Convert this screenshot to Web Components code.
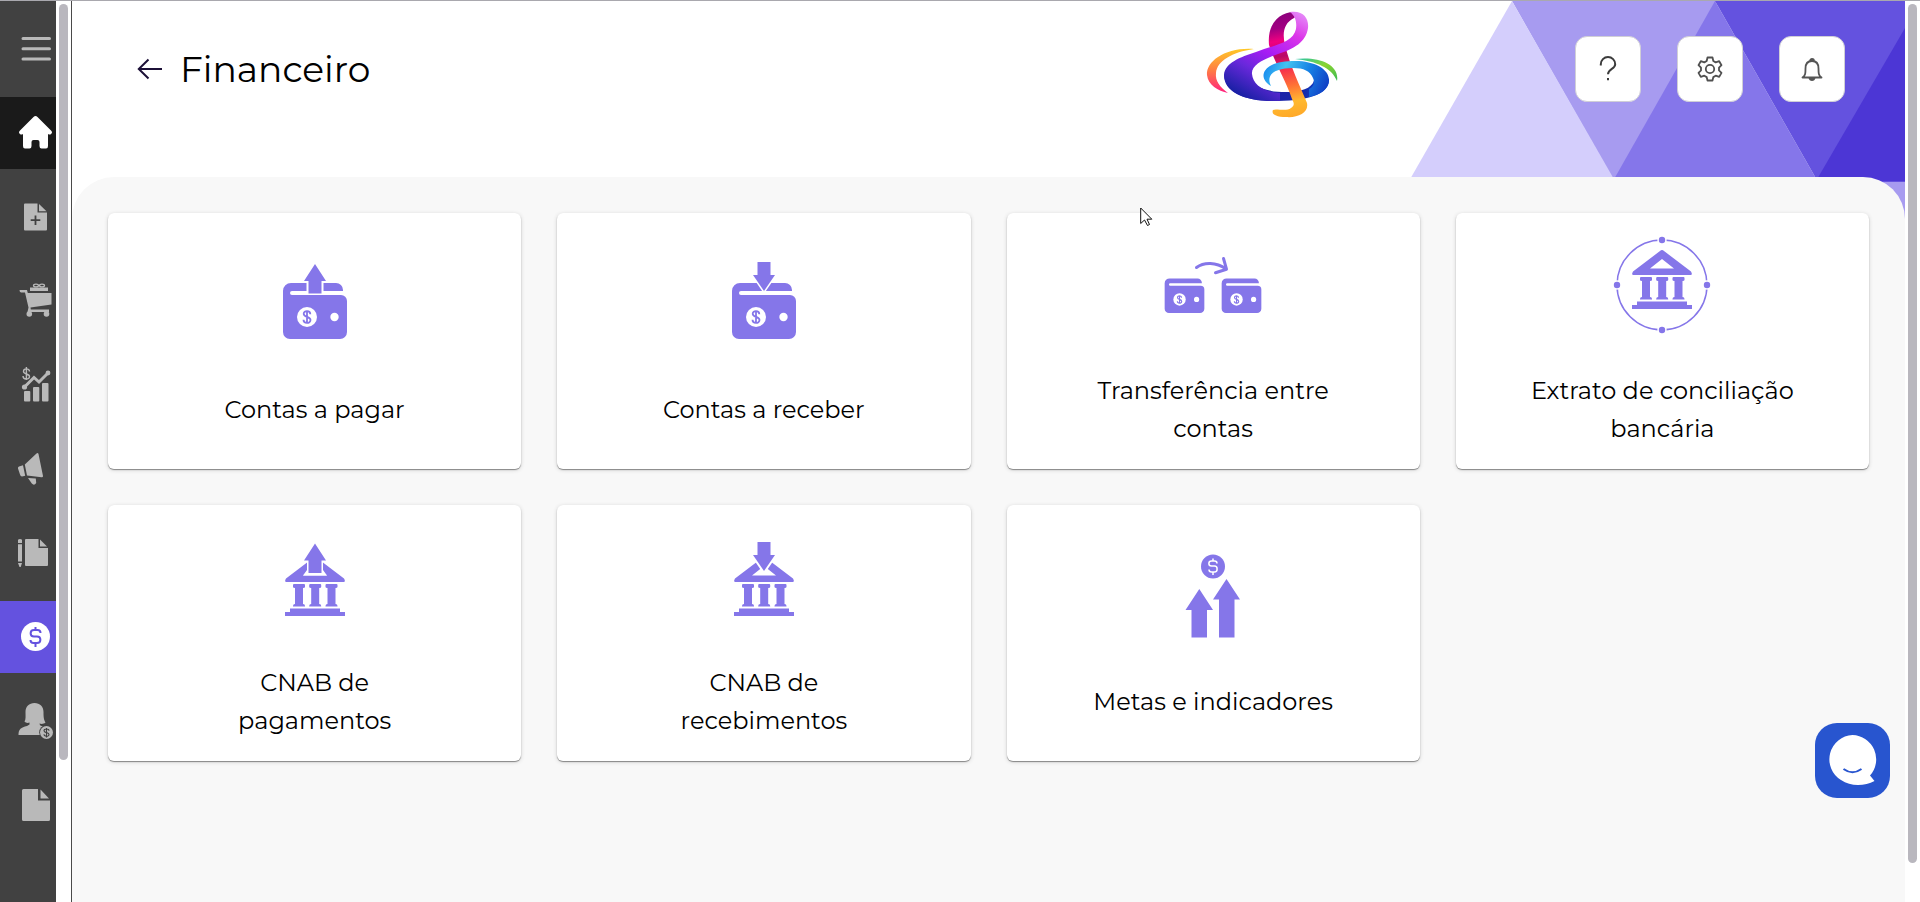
<!DOCTYPE html>
<html lang="pt-BR">
<head>
<meta charset="UTF-8">
<meta name="viewport" content="width=device-width, initial-scale=1.0">
<title>Financeiro</title>
<style>
    body {
        margin: 0;
        font-family: Montserrat, Inter, sans-serif;
        color: #000;
        background: #fff;
    }
</style>
</head>
<body>
<finance-app></finance-app>

<script>
const WALLET = `
    <path d="M26 49H71a7 7 0 0 1 7 7v1H27a2 2 0 0 0 0 4H76a6 6 0 0 1 6 6V98a7 7 0 0 1-7 7H25a7 7 0 0 1-7-7V57a8 8 0 0 1 8-8Z"/>
    <circle cx="42" cy="83" r="10" fill="#fff"/>
    <circle cx="69.500" cy="83" r="4.200" fill="#fff"/>
    <path d="M45.300 80.200c0-4-6.600-4-6.600-.4 0 3.800 6.800 2.400 6.800 6.300 0 3.800-7 3.800-7-.3M42 76.500v13" fill="none" stroke="#8576e9" stroke-width="1.800"/>`;

const COLUMNS = [28, 44.2, 60.5].map(x => `
    <path d="M${x + 1} 43h10q1 0 1 1v2q0 1-2 1v16q2 0 2 2v.6h-12V65q0-2 2-2V47q-2 0-2-1v-2q0-1 1-1Z"/>`).join('');

const BANK = `
    <path fill-rule="evenodd" d="M50 16q1 0 2 1l27 20.500q2 3.500-.5 3.500h-57q-2.500 0-.5-3.500L48 17q1-1 2-1ZM50 25 38 34.500H62Z"/>
    ${COLUMNS}
    <path d="M25 67.500H75V71h5v4H20v-4h5Z"/>`;

const UP = '<path d="M50 30 61 47H56.500V59.500H43.500V47H39Z"/>';

// name: [viewBox, markup]
const ICONS = {
    'menu': ['0 0 40 40', '<path d="M8 9.500H34.500M8 19.700H34.500M8 30H34.500" stroke="currentColor" stroke-width="3" stroke-linecap="round"/>'],
    'home': ['0 0 40 40', '<path d="M18.500 4q2-2 4 0L36 17.500q2 2 0 3.500-1 1-3 0V33q0 2.500-2 2.500h-4.500q-2 0-2-2.500v-4q0-2-2-2h-4q-2 0-2 2v4q0 2.500-2 2.500H10q-2 0-2-2.500V21q-2 1-3 0-2-1.500 0-3.500Z"/>'],
    'file-plus': ['0 0 40 40', '<path d="M10 6.500H22.500V15.500H32V32.500a1 1 0 0 1-1 1H10a1 1 0 0 1-1-1v-25a1 1 0 0 1 1-1Z"/><path d="M24 7l7.500 7.300H24Z"/><path d="M20.500 18.500v9.500M15.700 23.200h9.600" stroke="#414141" stroke-width="1.800"/>'],
    'cart': ['0 0 40 40', '<path d="M4.500 9h7.500l.8 3H36.500V23.500L15.500 26.500l.3 2H34V31H12.500L13.500 26.500 10 11.500H6q-1.500-.5-1.500-2.500Z"/><path d="M15 6.500h18V10H15Z"/><ellipse cx="21" cy="4.500" rx="2.500" ry="1.400" fill="none" stroke="currentColor" stroke-width="1.300"/><ellipse cx="27" cy="4.500" rx="2.500" ry="1.400" fill="none" stroke="currentColor" stroke-width="1.300"/><circle cx="14.300" cy="33" r="2.800"/><circle cx="31.500" cy="33" r="2.800"/>'],
    'chart': ['0 0 40 40', '<path d="M14.500 6.500c0-3.500-6-3.500-6 0 0 3 6 2 6 5 0 3.500-6.500 3.500-6.500-.5M11.400 2v13" fill="none" stroke="currentColor" stroke-width="1.400"/><path d="M9.500 22 19 12.500l5 4.500L33 8" fill="none" stroke="currentColor" stroke-width="3"/><circle cx="9.500" cy="22" r="2.600"/><circle cx="33" cy="8" r="2.400"/><rect x="9" y="26" width="6.300" height="10.500" rx="1"/><rect x="18" y="22" width="6.300" height="14.500" rx="1"/><rect x="27" y="18" width="6.500" height="18.500" rx="1"/>'],
    'megaphone': ['0 0 40 40', '<path d="M21.500 4.500q1.500-1 2 .5l4.500 22q0 1.500-1.500 1.200L12 26.500 9.800 15.500Z"/><path d="M8 16.300l2.200 10.500-3.200.7q-1.500 0-2-2L3 19.500q-.3-1.500 1-2Z"/><path d="M13 29l7.800.6.4 4.400q-2 3-4.400.6Z"/>'],
    'pencil-file': ['0 0 40 40', '<path d="M3 6.800q2-1.500 4 0V10H3ZM3 11.200H7V28.500H3ZM3 30H7L5.700 34H4.500Z"/><path d="M11 6H23.500V15H33V32a1 1 0 0 1-1 1H11a1 1 0 0 1-1-1V7a1 1 0 0 1 1-1Z"/><path d="M25 6.500l7 7H25Z"/>'],
    'dollar': ['0 0 40 40', '<circle cx="20.500" cy="19.500" r="14.500"/><path d="M25.500 16c0-2-1-3-3-3H19c-4.500 0-4.500 6.500 0 6.500h3c4.500 0 4.500 6.500 0 6.500h-3.500c-2 0-3-1-3-3M20.500 10v3M20.500 26v4" fill="none" stroke="#6452df" stroke-width="2"/>'],
    'person': ['0 0 40 40', '<path d="M19.500 2C25 2 28.500 5.500 28.500 11c0 5 .2 7.500 2 10.500-2 1.800-4.500 1.500-6 1l.5 1.800 3.500 1.700-3.500 8H3.500c0-6 2.500-7.500 8.500-9l2.500-1.500v-2c-1.500.7-4 .5-5-1C11 18.500 10.500 15 10.500 11 10.500 5.500 14 2 19.500 2Z"/><circle cx="31.500" cy="31.500" r="7.300" fill="#414141"/><circle cx="31.500" cy="31.500" r="6.500"/><path d="M34 29.800c0-2.500-5-2.500-5 0 0 2.400 5 1.300 5 3.700 0 2.400-5 2.400-5-.2M31.500 27v9.400" fill="none" stroke="#414141" stroke-width="1.100"/>'],
    'file': ['0 0 40 40', '<path d="M8.500 4H23V15.500H35V34.500a1.500 1.500 0 0 1-1.500 1.500h-25A1.500 1.500 0 0 1 7 34.500v-29A1.500 1.500 0 0 1 8.500 4Z"/><path d="M25.500 4.500l8.500 9H25.500Z"/>'],
    'back': ['0 0 26 22', '<path d="M26 11H3M12.500 1.500 2.800 11l9.700 9.500" fill="none" stroke="currentColor" stroke-width="2"/>'],
    'help': ['0 0 28 28', '<path d="M6.800 10.500v-1.300a7.200 7.200 0 1 1 14.400 0c0 5-7 4.300-7.200 10" fill="none" stroke="#3c3c3c" stroke-width="2"/><path d="M13 23h2v2.300h-2Z" fill="#3c3c3c"/>'],
    'gear': ['0 0 28 28', '<g fill="none" stroke="#505050" stroke-width="1.800" stroke-linejoin="round"><path d="M11.500 2.500h5l.8 3.500 2.400 1.400 3.500-1.200 2.300 4-2.500 2.500v2.700l2.500 2.500-2.300 4-3.500-1.200-2.400 1.400-.8 3.400h-5l-.8-3.400-2.400-1.400-3.500 1.200-2.300-4L5 15.400v-2.700l-2.500-2.500 2.300-4 3.500 1.200L10.700 6Z"/><circle cx="14" cy="14" r="4.200"/></g>'],
    'bell': ['0 0 28 28', '<path d="M4.500 22.500H23.500C20.500 20.500 20.500 18 20.500 13.500 20.500 9 18.500 6 14 6S7.500 9 7.500 13.500C7.500 18 7.500 20.500 4.500 22.500ZM12 6a2 2 0 1 1 4 0" fill="none" stroke="#555" stroke-width="1.800" stroke-linejoin="round"/><path d="M10.500 23h7q-.8 3-3.500 3t-3.500-3Z" fill="#555"/>'],
    'wallet-up': ['0 0 100 112', `${WALLET}<path d="M41.500 48h17V60h-17Z" fill="#fff"/>${UP}`],
    'wallet-down': ['0 0 100 112', `${WALLET}<path d="M43.500 28H56.500V41H61L50 57 39 41H43.500Z" stroke="#fff" stroke-width="3" paint-order="stroke"/>`],
    'transfer': ['0 0 100 112', `<g transform="translate(-9.500 14) scale(.62)">${WALLET}</g><g transform="translate(47.500 14) scale(.62)">${WALLET}</g><path d="M33.500 33.500C41 28 53 28 63 35M60.500 24.500 63.500 35.200 52.500 38.700" fill="none" stroke="currentColor" stroke-width="3" stroke-linecap="round" stroke-linejoin="round"/>`],
    'bank-circle': ['0 0 100 112', `${BANK}<circle cx="50" cy="51" r="45" fill="none" stroke="currentColor" stroke-width="1.500"/><g stroke="#fff" stroke-width="3" paint-order="stroke"><circle cx="50" cy="6" r="3.200"/><circle cx="50" cy="96" r="3.200"/><circle cx="5" cy="51" r="3.200"/><circle cx="95" cy="51" r="3.200"/></g>`],
    'bank-up': ['0 0 100 112', `<g transform="translate(0 15)">${BANK}<path d="M42 14H58V29L62 34.500H38L42 29Z" fill="#fff"/></g><g transform="translate(0 -12.500)">${UP}</g>`],
    'bank-down': ['0 0 100 112', `<g transform="translate(0 15)">${BANK}</g><path d="M43.500 16H56.500V29H61L50 45 39 29H43.500Z" stroke="#fff" stroke-width="4" paint-order="stroke"/>`],
    'goals': ['0 0 100 112', '<circle cx="50" cy="40.500" r="12"/><path d="M54 37.500c0-2-1-2.500-2.500-2.500h-3c-3.500 0-3.500 5 0 5h3c3.500 0 3.500 6 0 6h-3c-1.500 0-2.500-1-2.500-2.500M50 32.500V35M50 46v3" fill="none" stroke="#fff" stroke-width="1.500"/><path d="M36.300 63 50 84H44v27.500H28.500V84h-6ZM63.500 53 77 73.500H71.500v38H56v-38H50Z"/>'],
    'chat': ['0 0 75 75', '<path d="M37.500 12a24.300 24.300 0 0 1 17.500 40.500l4.500 5.500C50 63 36 64 26 57A24.300 24.300 0 0 1 37.500 12Z" fill="#fff"/><path d="M28.500 46q9 6.500 18 0" fill="none" stroke="#2855cf" stroke-width="2"/>'],
    'pointer': ['0 0 14 20', '<path d="M.7 1V16.500L4.500 13 7.500 18.500 9.500 17.500 7 12.200H11.800Z" fill="#fff" stroke="#111" stroke-width="1"/>']
};

class AppIcon extends HTMLElement {
    constructor() {
        super();
        this.attachShadow({ mode: 'open' });
    }

    connectedCallback() {
        const [viewBox, markup] = ICONS[this.getAttribute('name')];
        const [, , width, height] = viewBox.split(' ');

        this.shadowRoot.innerHTML = `
            <style>
                :host {
                    display: block;
                    flex: none;
                }

                svg {
                    display: block;
                }
            </style>
            <svg viewBox="${viewBox}" width="${width}" height="${height}" fill="currentColor" aria-hidden="true">${markup}</svg>
        `;
    }
}

class ScrollTrack extends HTMLElement {
    constructor() {
        super();
        this.attachShadow({ mode: 'open' });
    }

    connectedCallback() {
        this.shadowRoot.innerHTML = `
            <style>
                :host {
                    display: block;
                    box-sizing: border-box;
                    width: 15px;
                    padding: 3px;
                    background: #fff;
                }

                .thumb {
                    width: 9px;
                    height: var(--thumb, 96%);
                    border-radius: 5px;
                    background: #b9b7be;
                }
            </style>
            <div class="thumb"></div>
        `;
    }
}

class SideItem extends HTMLElement {
    constructor() {
        super();
        this.attachShadow({ mode: 'open' });
    }

    connectedCallback() {
        this.shadowRoot.innerHTML = `
            <style>
                :host {
                    display: block;
                    color: #b9b9b9;
                }

                :host([state="home"]) {
                    color: #fff;
                    background: #1a1a1a;
                }

                :host([state="active"]) {
                    color: #fff;
                    background: #6452df;
                }

                a {
                    display: flex;
                    align-items: center;
                    height: 72px;
                    padding-left: 15px;
                    color: inherit;
                }
            </style>
            <a href="#" aria-label="${this.getAttribute('label')}"><app-icon name="${this.getAttribute('icon')}"></app-icon></a>
        `;
    }
}

class SideMenu extends HTMLElement {
    constructor() {
        super();
        this.attachShadow({ mode: 'open' });
    }

    connectedCallback() {
        this.shadowRoot.innerHTML = `
            <style>
                :host {
                    display: flex;
                    border-right: 1px solid #4a4a4a;
                    overflow: hidden;
                    --thumb: 84.5%;
                }

                nav {
                    display: flex;
                    flex-direction: column;
                    gap: 12px;
                    width: 56px;
                    padding-top: 12px;
                    background: #414141;
                }
            </style>
            <nav>
                <side-item icon="menu" label="Menu"></side-item>
                <side-item icon="home" label="Início" state="home"></side-item>
                <side-item icon="file-plus" label="Cadastros"></side-item>
                <side-item icon="cart" label="Compras"></side-item>
                <side-item icon="chart" label="Vendas"></side-item>
                <side-item icon="megaphone" label="Marketing"></side-item>
                <side-item icon="pencil-file" label="Contratos"></side-item>
                <side-item icon="dollar" label="Financeiro" state="active"></side-item>
                <side-item icon="person" label="Comissões"></side-item>
                <side-item icon="file" label="Relatórios"></side-item>
            </nav>
            <scroll-track></scroll-track>
        `;
    }
}

class BrandLogo extends HTMLElement {
    constructor() {
        super();
        this.attachShadow({ mode: 'open' });
    }

    connectedCallback() {
        this.shadowRoot.innerHTML = `
            <style>
                :host, svg {
                    display: block;
                }
            </style>
            <svg viewBox="0 0 133 107" width="133" height="107" role="img" aria-label="Logo">
                <defs>
                    <linearGradient id="warm" x1="0" y1="0" x2="0" y2="1">
                        <stop offset="0" stop-color="#ffc928"/><stop offset=".5" stop-color="#ff7a45"/><stop offset="1" stop-color="#ff2080"/>
                    </linearGradient>
                    <linearGradient id="ribbon" gradientUnits="userSpaceOnUse" x1="70" y1="4" x2="90" y2="106">
                        <stop offset="0" stop-color="#8d007c"/><stop offset=".13" stop-color="#a10082"/><stop offset=".25" stop-color="#f00080"/><stop offset=".4" stop-color="#b80868"/><stop offset=".5" stop-color="#f5264f"/><stop offset=".7" stop-color="#ff7435"/><stop offset=".85" stop-color="#ffb930"/><stop offset="1" stop-color="#ffa828"/>
                    </linearGradient>
                    <linearGradient id="violet" gradientUnits="userSpaceOnUse" x1="96" y1="2" x2="45" y2="90">
                        <stop offset="0" stop-color="#e58af8"/><stop offset=".22" stop-color="#dc35e8"/><stop offset=".5" stop-color="#a81cf5"/><stop offset=".72" stop-color="#6a28dc"/><stop offset="1" stop-color="#1a20a5"/>
                    </linearGradient>
                    <linearGradient id="deep" gradientUnits="userSpaceOnUse" x1="20" y1="60" x2="124" y2="70">
                        <stop offset="0" stop-color="#6028d5"/><stop offset=".35" stop-color="#2020a8"/><stop offset=".75" stop-color="#1828a8"/><stop offset="1" stop-color="#0750dd"/>
                    </linearGradient>
                    <linearGradient id="ring" gradientUnits="userSpaceOnUse" x1="58" y1="56" x2="118" y2="82">
                        <stop offset="0" stop-color="#1689ef"/><stop offset=".3" stop-color="#43c3f1"/><stop offset=".65" stop-color="#1681e5"/><stop offset="1" stop-color="#1040c5"/>
                    </linearGradient>
                    <linearGradient id="leaf" x1="0" y1="0" x2="1" y2="1">
                        <stop offset="0" stop-color="#24c4ae"/><stop offset=".5" stop-color="#8bd52f"/><stop offset="1" stop-color="#39b955"/>
                    </linearGradient>
                </defs>
                <path fill="url(#warm)" d="M48 38C20 36 0 50 1 64 2 74 12 80 22 82 14 76 9 70 10 62 11 50 26 41 48 38Z"/>
                <path fill="url(#leaf)" d="M89 48C112 45 134 53 131 70 126 57 110 50 89 48Z"/>
                <path fill="url(#deep)" d="M18 64C19 82 40 90 66 90 100 90 124 84 123 68L108 62C111 74 101 80 85 81 62 82 46 76 46 66Z"/>
                <path fill="url(#ribbon)" d="M63 34C61 12 74 1 88 1 92 3 90 6 88 7 78 12 76 22 79 34 84 55 94 75 101 92 103 102 92 107 80 106 70 106 65 103 67 99 70 97 80 101 85 97 89 94 88 92 86 88 80 70 68 50 63 34Z"/>
                <path fill="url(#violet)" d="M84 1C98-1 103 8 102 17 100 31 88 38 72 43 58 48 45 54 46 63 47 74 58 81 74 82V90C40 91 18 82 18 64 19 52 34 46 50 41 68 34 87 32 90 18 91 10 89 5 84 1Z"/>
                <path fill="url(#ring)" d="M65 75C52 68 54 51 86 50 106 49 123 57 123 69 123 78 114 84 103 86V78C108 76 109 71 107 67 104 60 98 57 87 57 70 57 59 63 65 75Z"/>
            </svg>
        `;
    }
}

class PageHeader extends HTMLElement {
    constructor() {
        super();
        this.attachShadow({ mode: 'open' });
    }

    connectedCallback() {
        this.shadowRoot.innerHTML = `
            <style>
                :host {
                    display: flex;
                    align-items: flex-start;
                    box-sizing: border-box;
                    height: 176px;
                    padding: 10px 60px 0 64px;
                }

                .title, .actions {
                    display: flex;
                    align-items: center;
                    height: 66px;
                    margin-top: 25px;
                }

                .title {
                    gap: 18px;
                    margin-right: auto;
                }

                .title a {
                    color: #1c1037;
                }

                h1 {
                    margin: 0;
                    font-size: 36px;
                    font-weight: 400;
                    line-height: 44px;
                }

                .actions {
                    gap: 36px;
                    margin-left: 236px;
                }

                button {
                    display: flex;
                    align-items: center;
                    justify-content: center;
                    width: 66px;
                    height: 66px;
                    padding: 0;
                    border: 1px solid #d0cfd6;
                    border-radius: 12px;
                    background: #fff;
                }
            </style>
            <div class="title">
                <a href="#" aria-label="Voltar"><app-icon name="back"></app-icon></a>
                <h1><slot></slot></h1>
            </div>
            <brand-logo></brand-logo>
            <div class="actions">
                <button type="button" aria-label="Ajuda"><app-icon name="help"></app-icon></button>
                <button type="button" aria-label="Configurações"><app-icon name="gear"></app-icon></button>
                <button type="button" aria-label="Notificações"><app-icon name="bell"></app-icon></button>
            </div>
        `;
    }
}

class MenuCard extends HTMLElement {
    constructor() {
        super();
        this.attachShadow({ mode: 'open' });
    }

    connectedCallback() {
        this.shadowRoot.innerHTML = `
            <style>
                :host {
                    display: block;
                }

                a {
                    display: flex;
                    flex-direction: column;
                    align-items: center;
                    gap: 26px;
                    padding: 21px;
                    border-radius: 6px;
                    background: #fff;
                    box-shadow: 0 1px 1px rgba(0, 0, 0, .4), 0 1px 4px rgba(0, 0, 0, .16);
                    color: #000;
                    text-decoration: none;
                }

                app-icon {
                    color: #8576e9;
                }

                .label {
                    display: flex;
                    align-items: center;
                    min-height: 76px;
                    font-size: 24px;
                    line-height: 38px;
                    text-align: center;
                }
            </style>
            <a href="#">
                <app-icon name="${this.getAttribute('icon')}"></app-icon>
                <span class="label"><span><slot></slot></span></span>
            </a>
        `;
    }
}

class FinanceApp extends HTMLElement {
    constructor() {
        super();
        this.attachShadow({ mode: 'open' });
    }

    connectedCallback() {
        this.shadowRoot.innerHTML = `
            <style>
                :host {
                    display: grid;
                    grid-template-columns: auto 1fr auto;
                    box-sizing: border-box;
                    height: 100vh;
                    border-top: 1px solid #a9a8ae;
                    overflow: hidden;
                }

                main {
                    display: flex;
                    flex-direction: column;
                    position: relative;
                    min-width: 0;
                }

                .art {
                    position: absolute;
                    top: 0;
                    right: 0;
                }

                page-header, .panel {
                    position: relative;
                }

                .panel {
                    flex: 1;
                    padding: 36px;
                    border-radius: 42px 42px 0 0;
                    background: #f8f8f8;
                }

                .cards {
                    display: grid;
                    grid-template-columns: repeat(4, 1fr);
                    gap: 36px;
                }

                .chat {
                    position: absolute;
                    right: 15px;
                    bottom: 104px;
                    padding: 0;
                    border: 0;
                    border-radius: 22px;
                    background: #2855cf;
                }

                .pointer {
                    position: absolute;
                    top: 206px;
                    left: 1068px;
                }
            </style>
            <side-menu></side-menu>
            <main>
                <svg class="art" width="494" height="226" viewBox="0 0 494 226" aria-hidden="true">
                    <path fill="#a79bf0" d="M101 0H305L203 180ZM400 181H494V226H400Z"/>
                    <path fill="#d4cefc" d="M-2 180 101 0 204 180Z"/>
                    <path fill="#8576ea" d="M202 180 304 0 407 181H202Z"/>
                    <path fill="#6452df" d="M304 0H494V181H407Z"/>
                    <path fill="#4c36d5" d="M405 180 494 27V180Z"/>
                </svg>
                <page-header>Financeiro</page-header>
                <section class="panel">
                    <div class="cards">
                        <menu-card icon="wallet-up">Contas a pagar</menu-card>
                        <menu-card icon="wallet-down">Contas a receber</menu-card>
                        <menu-card icon="transfer">Transferência entre<br>contas</menu-card>
                        <menu-card icon="bank-circle">Extrato de conciliação<br>bancária</menu-card>
                        <menu-card icon="bank-up">CNAB de<br>pagamentos</menu-card>
                        <menu-card icon="bank-down">CNAB de<br>recebimentos</menu-card>
                        <menu-card icon="goals">Metas e indicadores</menu-card>
                    </div>
                </section>
                <button class="chat" type="button" aria-label="Abrir chat"><app-icon name="chat"></app-icon></button>
                <app-icon class="pointer" name="pointer"></app-icon>
            </main>
            <scroll-track></scroll-track>
        `;
    }
}

customElements.define('app-icon', AppIcon);
customElements.define('scroll-track', ScrollTrack);
customElements.define('side-item', SideItem);
customElements.define('side-menu', SideMenu);
customElements.define('brand-logo', BrandLogo);
customElements.define('page-header', PageHeader);
customElements.define('menu-card', MenuCard);
customElements.define('finance-app', FinanceApp);
</script>
</body>
</html>
